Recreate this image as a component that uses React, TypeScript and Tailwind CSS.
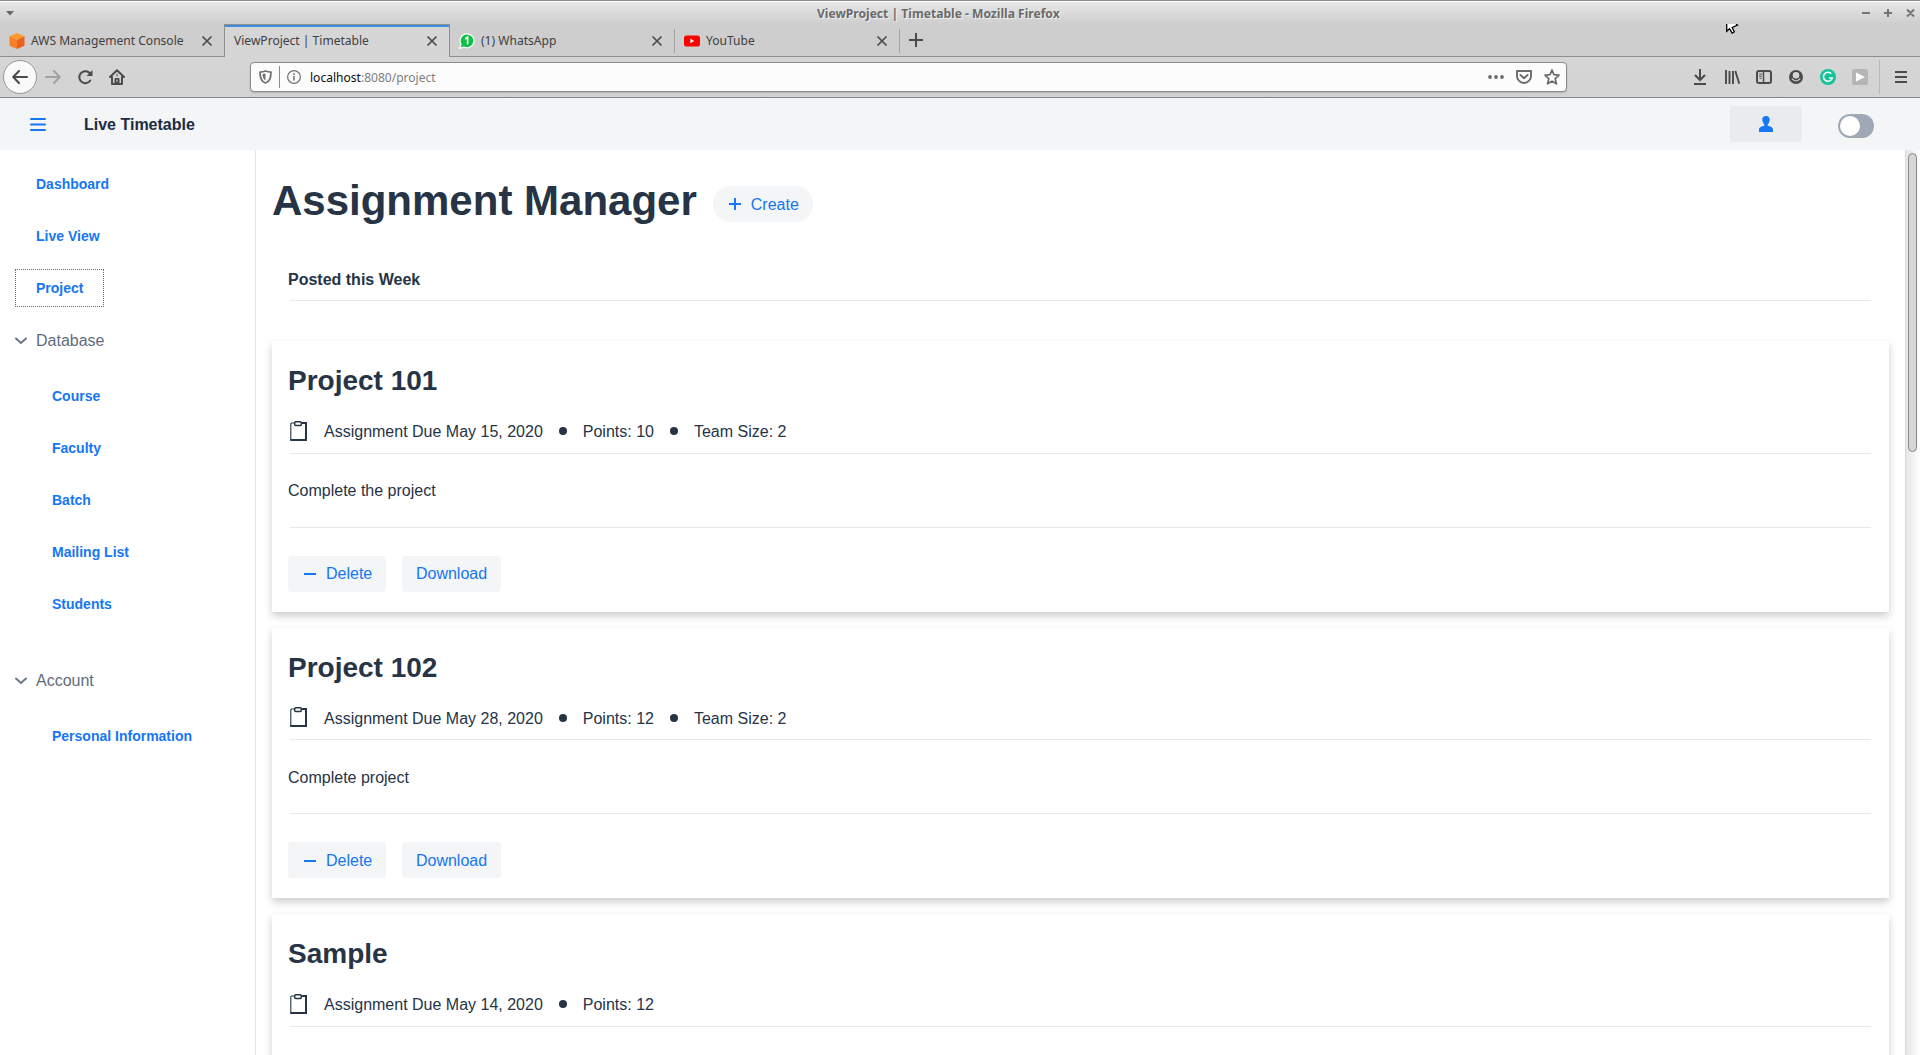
import React from "react";

const projects = [
  { title: "Project 101", due: "May 15, 2020", points: 10, team: 2, body: "Complete the project" },
  { title: "Project 102", due: "May 28, 2020", points: 12, team: 2, body: "Complete project" },
  { title: "Sample", due: "May 14, 2020", points: 12, team: null, body: "" },
];

function CloseX() {
  return (
    <svg width="12" height="12" viewBox="0 0 12 12" stroke="#4b4b4b" strokeWidth="1.7" className="shrink-0">
      <path d="M1.500 1.500l9 9M10.500 1.500l-9 9" />
    </svg>
  );
}

function Tab({ icon, label }: { icon?: React.ReactNode; label: string }) {
  return (
    <>
      {icon && <span className="mr-[6px] flex w-4 shrink-0 justify-center">{icon}</span>}
      <span className="flex-1 whitespace-nowrap">{label}</span>
      <CloseX />
    </>
  );
}

function TitleBar() {
  return (
    <div className="flex h-6 items-center border-t border-[#8e8b8e] bg-linear-to-b from-[#e8e8e8] to-[#cecece] pl-[6px] pr-[5px] shadow-[inset_0_1px_0_#fff]">
      <svg width="8" height="5" viewBox="0 0 8 5" className="mt-px"><path d="M0 0h8L4 4.600z" fill="#666" /></svg>
      <span className="ml-[803px] mt-[3px] whitespace-nowrap text-[12.1px] font-bold text-[#6a6a6a] [text-shadow:1px_1px_0_#efefef]">
        ViewProject | Timetable - Mozilla Firefox
      </span>
      <svg className="ml-auto mt-px" width="54" height="10" viewBox="0 0 54 10" stroke="#747474" strokeWidth="2" fill="none">
        <path d="M1 5h8M23 5h8M27 1v8M46 1.500l7 7M53 1.500l-7 7" />
      </svg>
    </div>
  );
}

function TabStrip() {
  return (
    <div className="flex h-[33px] bg-[#cecece] text-[12.05px] text-[#404040]">
      <div className="flex w-[224px] items-center border-b border-[#8e8e8e] pl-[9px] pr-[11px] pt-[2px]">
        <Tab
          label="AWS Management Console"
          icon={
            <svg width="16" height="16" viewBox="0 0 16 16">
              <path d="M8 0l7.500 3.200L8 7 .5 3.200z" fill="#fe9b2a" />
              <path d="M.5 3.200L8 7v9L.5 12.700z" fill="#f58025" />
              <path d="M15.500 3.200L8 7v9l7.500-3.300z" fill="#ea6120" />
            </svg>
          }
        />
      </div>
      <div className="flex w-[226px] items-center border-x border-t border-[#8e8e8e] bg-[#d6d6d6] pl-[9px] pr-[11px] shadow-[inset_0_2px_0_#3a8ee0]">
        <Tab label="ViewProject | Timetable" />
      </div>
      <div className="flex w-[224px] items-center border-b border-[#8e8e8e] pl-[9px] pr-[11px] pt-[2px]">
        <Tab
          label="(1) WhatsApp"
          icon={
            <svg width="16" height="16" viewBox="0 0 16 16">
              <path d="M8.300.8a7 7 0 1 1-3.400 13.300L.8 15.300 2 11.200A7 7 0 0 1 8.300.8z" fill="#0dc143" stroke="#fff" strokeWidth="1.200" />
              <path d="M6.300 6l2.300-1.700V11.300" fill="none" stroke="#fff" strokeWidth="1.700" />
            </svg>
          }
        />
      </div>
      <div className="flex w-px items-center border-b border-[#8e8e8e]"><div className="mt-px h-6 w-px shrink-0 bg-[#a5a5a5]" /></div>
      <div className="flex w-[224px] items-center border-b border-[#8e8e8e] pl-[9px] pr-[11px] pt-[2px]">
        <Tab
          label="YouTube"
          icon={
            <svg width="16" height="12" viewBox="0 0 16 12">
              <rect y=".5" width="16" height="11" rx="2.500" fill="#f00" />
              <path d="M6.300 3.800v4.400L10.200 6z" fill="#fff" />
            </svg>
          }
        />
      </div>
      <div className="flex flex-1 items-center border-b border-[#8e8e8e]">
        <div className="mt-px h-6 w-px bg-[#a5a5a5]" />
        <svg width="14" height="14" viewBox="0 0 14 14" className="ml-[9px]" stroke="#4b4b4b" strokeWidth="2"><path d="M7 0v14M0 7h14" /></svg>
      </div>
    </div>
  );
}

function NavBar() {
  return (
    <div className="flex h-[41px] items-center border-b border-[#858585] bg-linear-to-b from-[#d6d6d6] to-[#d3d3d3] pl-[3px]">
      <div className="flex size-[34px] items-center justify-center rounded-full border border-[#979797] bg-[#f9f9f9]">
        <svg width="16" height="14" viewBox="0 0 16 14" fill="none" stroke="#4b4b4b" strokeWidth="2" strokeLinecap="round" strokeLinejoin="round"><path d="M15 7H1.500M7 1L1.200 7 7 13" /></svg>
      </div>
      <svg className="ml-2" width="16" height="14" viewBox="0 0 16 14" fill="none" stroke="#a2a2a2" strokeWidth="2" strokeLinecap="round" strokeLinejoin="round"><path d="M1 7h13.500M9 1l5.800 6L9 13" /></svg>
      <svg className="ml-4" width="17" height="16" viewBox="0 0 17 16" fill="none" stroke="#4b4b4b" strokeWidth="2"><path d="M13.300 11.500A6 6 0 1 1 12 3.400l1.500 1.400" strokeLinecap="round" /><path d="M15.500 1v6h-6z" fill="#4b4b4b" stroke="none" /></svg>
      <svg className="ml-[15px]" width="16" height="16" viewBox="0 0 16 16" fill="none" stroke="#4b4b4b" strokeWidth="2" strokeLinejoin="round" strokeLinecap="round"><path d="M1 8l7-6.700L15 8M3 8v7h10V8" /><path d="M6 15V9.500h4V15zM8 5v2" fill="#4b4b4b" strokeWidth="1" /><path d="M8 11v1.500" stroke="#d5d5d5" strokeWidth="1" /></svg>
      <div className="ml-[125px] flex h-[30px] w-[1317px] items-center rounded-[4px] border border-[#8a8a8a] bg-[#fcfcfc] pl-2 pr-[6px] text-[12.05px] shadow-[0_1px_2px_rgba(0,0,0,0.15)]">
        <svg width="13" height="14" viewBox="0 0 13 14" fill="none" stroke="#737373" strokeWidth="1.800"><path d="M1 2.200Q4 1.800 6.500 1 9 1.800 12 2.200C12 8 11 11.500 6.500 13 2 11.500 1 8 1 2.200z" strokeLinejoin="round" /><path d="M6.500 3.500v7C4 9 3.500 7 3.500 4z" fill="#737373" stroke="none" /></svg>
        <div className="ml-[7px] h-[22px] w-px bg-[#8a8a8a]" />
        <svg className="ml-[7px]" width="14" height="14" viewBox="0 0 14 14" fill="none" stroke="#737373"><circle cx="7" cy="7" r="6.400" strokeWidth="1.200" /><path d="M7 6v4.500M7 3.300v1.700" strokeWidth="1.600" /></svg>
        <span className="ml-[9px] mt-[2px] flex-1 text-[#7e7e7e]"><span className="text-[#0c0c0d]">localhost</span>:8080/project</span>
        <svg width="16" height="4" viewBox="0 0 16 4" fill="#6b6b6b"><circle cx="2" cy="2" r="1.900" /><circle cx="8" cy="2" r="1.900" /><circle cx="14" cy="2" r="1.900" /></svg>
        <svg className="ml-3" width="16" height="14" viewBox="0 0 16 14" fill="none" stroke="#6b6b6b" strokeWidth="1.900" strokeLinecap="round" strokeLinejoin="round"><path d="M1 1h14v5a7 7 0 0 1-14 0z" /><path d="M4.500 5L8 8.300 11.500 5" /></svg>
        <svg className="ml-3" width="16" height="16" viewBox="0 0 16 16" fill="none" stroke="#6b6b6b" strokeWidth="1.700" strokeLinejoin="round"><path d="M8 1l2 4.700 5 .5-3.800 3.400 1.200 5.200L8 12.100l-4.400 2.700 1.200-5.200L1 6.200l5-.5z" /></svg>
      </div>
      <svg className="ml-[127px]" width="13" height="16" viewBox="0 0 13 16" fill="none" stroke="#4b4b4b" strokeWidth="2"><path d="M6 0v10M1 6l5 5 5-5M0 15h12" /></svg>
      <svg className="ml-[18px]" width="15" height="14" viewBox="0 0 15 14" fill="none" stroke="#4b4b4b" strokeWidth="1.900"><path d="M1 0v14M4.500 1v13M8 1v13M10.300 1l4 12.700" /></svg>
      <svg className="ml-4" width="16" height="14" viewBox="0 0 16 14" fill="none" stroke="#4b4b4b"><rect x="1" y="1" width="14" height="12" rx="2" strokeWidth="2" /><path d="M7.500 1v12" strokeWidth="1.500" /><path d="M3 4h3M3 6.200h3M3.500 8.400h2" strokeWidth="1" /></svg>
      <svg className="ml-[17px]" width="14" height="14" viewBox="0 0 14 14"><circle cx="7" cy="7" r="7" fill="#4b4b4b" /><circle cx="7" cy="5.300" r="3.300" fill="#d5d5d5" /><path d="M2.800 8.700Q7 13.300 11.200 8.700" stroke="#d5d5d5" fill="none" strokeWidth="1.200" /></svg>
      <svg className="ml-[17px]" width="16" height="16" viewBox="0 0 16 16" fill="none"><circle cx="8" cy="8" r="8" fill="#15c39a" /><path d="M11.300 4.700A4.500 4.500 0 1 0 12.300 9H9" stroke="#fff" strokeWidth="1.500" /></svg>
      <svg className="ml-4" width="16" height="16" viewBox="0 0 16 16"><rect width="16" height="16" rx="2" fill="#b5b5b5" /><path d="M4 3.500v9L13 8z" fill="#fff" /></svg>
      <div className="ml-[11px] h-[34px] w-px bg-[#b9b9b9]" />
      <svg className="ml-[15px]" width="12" height="12" viewBox="0 0 12 12" stroke="#4b4b4b" strokeWidth="2"><path d="M0 1h12M0 6h12M0 11h12" /></svg>
    </div>
  );
}

function AppHeader() {
  return (
    <div className="flex h-[52px] shrink-0 items-center bg-[#f3f5f7] pl-[30px]">
      <svg className="mt-px" width="16" height="13" viewBox="0 0 16 13" stroke="#1676f3" strokeWidth="2" strokeLinecap="round"><path d="M1 1h14M1 6.500h14M1 12h14" /></svg>
      <span className="ml-[38px] mt-[2px] flex-1 font-bold text-[#1b2b41]">Live Timetable</span>
      <div className="flex h-9 w-[72px] items-center justify-center rounded-r-[4px] bg-[#e8ecef]">
        <svg width="14" height="16" viewBox="0 0 14 16" fill="#1676f3"><path d="M7 0c2.300 0 3.800 1.500 3.700 3.800C10.600 6 9.500 7.700 8.700 8.400V9.700c2.500.5 5.300 1.600 5.300 3.800V16H0v-2.500c0-2.200 2.800-3.300 5.300-3.800V8.400C4.500 7.700 3.400 6 3.300 3.800 3.200 1.500 4.700 0 7 0z" /></svg>
      </div>
      <div className="ml-9 mr-[46px] mt-1 h-6 w-9 rounded-full bg-[#9fa9b6] p-[2px]"><div className="size-5 rounded-full bg-white" /></div>
    </div>
  );
}

function NavLink({ label, nested, active }: { label: string; nested?: boolean; active?: boolean }) {
  return (
    <div className="flex h-[52px] items-center">
      <span className={`${nested ? "ml-[31px]" : "ml-[15px]"} ${active ? "outline-1 outline-dotted -outline-offset-1 outline-[#1676f3]" : ""} flex h-[38px] items-center px-[21px] text-sm font-bold text-[#1676f3]`}>{label}</span>
    </div>
  );
}

function Section({ label }: { label: string }) {
  return (
    <div className="flex h-[53px] items-center pl-[15px] pt-px text-[#5f6c7d]">
      <svg width="12" height="8" viewBox="0 0 12 8" fill="none" stroke="#6b7787" strokeWidth="2" strokeLinecap="round" className="mr-[9px]"><path d="M1 1.500l5 4.500 5-4.500" /></svg>
      {label}
    </div>
  );
}

function Sidebar() {
  return (
    <div className="w-64 shrink-0 border-r border-[#e3e5e8] pt-2">
      <NavLink label="Dashboard" />
      <NavLink label="Live View" />
      <NavLink label="Project" active />
      <Section label="Database" />
      <div className="mb-[24px] mt-[3px]">
        {["Course", "Faculty", "Batch", "Mailing List", "Students"].map((l) => <NavLink key={l} label={l} nested />)}
      </div>
      <Section label="Account" />
      <div className="mt-[3px]"><NavLink label="Personal Information" nested /></div>
    </div>
  );
}

function Dot() {
  return <span className="size-2 rounded-full bg-[#263446]" />;
}

function Card({ p }: { p: (typeof projects)[number] }) {
  return (
    <div className="mb-4 h-[270.500px] shrink-0 bg-white px-4 shadow-[0_4px_8px_0_rgba(0,0,0,0.2)]">
      <h2 className="flex h-[79.500px] items-center pt-px text-[28px] font-bold">{p.title}</h2>
      <div className="mx-[2px] flex h-[33.200px] items-start border-b border-[#e6e8ea]">
        <svg width="17" height="20" viewBox="0 0 17 20" fill="none" stroke="#263446"><path d="M4 2H1.500L.8 2.700v16.500h13" strokeWidth="1.100" /><path d="M12 2h4v17H.5" strokeWidth="2" /><rect x="4.700" y=".8" width="6.600" height="3.700" rx="1" strokeWidth="1.500" fill="#fff" /></svg>
        <span className="ml-[17px] mt-[.5px] h-5 whitespace-nowrap leading-[21px]">Assignment Due {p.due}</span>
        <div className="ml-4 flex h-[21px] items-center gap-4 whitespace-nowrap">
          <Dot />
          <span className="mt-px leading-[21px]">Points: {p.points}</span>
          {p.team !== null && <><Dot /><span className="mt-px leading-[21px]">Team Size: {p.team}</span></>}
        </div>
      </div>
      <div className="mx-[2px] flex h-[73.900px] items-center border-b border-[#e6e8ea] pt-[1.800px]"><span className="-ml-[2px]">{p.body}</span></div>
      <div className="mt-[28.100px] flex gap-4 text-[#1676f3]">
        <div className="flex h-9 w-[98px] items-center rounded-[4px] bg-[#f3f5f7] pl-4 pt-[.6px]">
          <span className="h-[2px] w-3 bg-[#1676f3]" /><span className="ml-[10px]">Delete</span>
        </div>
        <div className="flex h-9 w-[99px] items-center justify-center rounded-[4px] bg-[#f3f5f7] pt-[.6px]">Download</div>
      </div>
    </div>
  );
}

export default function App() {
  return (
    <div className="relative flex h-[1055px] w-[1920px] flex-col overflow-hidden bg-white">
      <div className="font-['Noto_Sans',sans-serif]">
        <TitleBar />
        <TabStrip />
        <NavBar />
      </div>
      <div className="flex min-h-0 flex-1 flex-col font-['Liberation_Sans',sans-serif] text-base text-[#263446]">
        <AppHeader />
        <div className="flex min-h-0 flex-1">
          <Sidebar />
          <main className="flex min-w-0 flex-1 flex-col overflow-hidden pl-4 pr-4">
            <div className="flex h-[100px] shrink-0 items-center">
              <h1 className="mt-[2px] whitespace-nowrap text-[42px] font-bold leading-none">Assignment Manager</h1>
              <div className="ml-4 mt-2 flex h-9 w-[100px] items-center rounded-full bg-[#f3f5f7] pl-4 text-[#1676f3]">
                <svg width="12" height="12" viewBox="0 0 12 12" stroke="#1676f3" strokeWidth="2"><path d="M6 0v12M0 6h12" /></svg>
                <span className="ml-[10px] mt-[2px]">Create</span>
              </div>
            </div>
            <div className="mb-[40.200px] ml-[18px] mr-[18px] flex h-[51px] shrink-0 items-center border-b border-[#e6e8f0] pt-[10px] font-bold"><span className="-ml-[2px]">Posted this Week</span></div>
            {projects.map((p) => <Card key={p.title} p={p} />)}
          </main>
          <div className="w-[15px] shrink-0 border-l border-[#d9d9d9] bg-linear-to-r from-[#e6e6e6] to-white pl-[2px] pt-[3px]">
            <div className="h-[299px] w-[9px] rounded-full border border-[#888] bg-[#d6d6d6]" />
          </div>
        </div>
      </div>
      <svg className="absolute left-[1726px] top-[24px]" width="13" height="10" viewBox="0 0 13 10"><path d="M.7 0v7.300l2.800-2.600L6.200 9.200 8.300 7.800 6.200 3.500 11.500 1.200 10 0" fill="#fff" stroke="#000" strokeWidth="1.300" /></svg>
    </div>
  );
}
